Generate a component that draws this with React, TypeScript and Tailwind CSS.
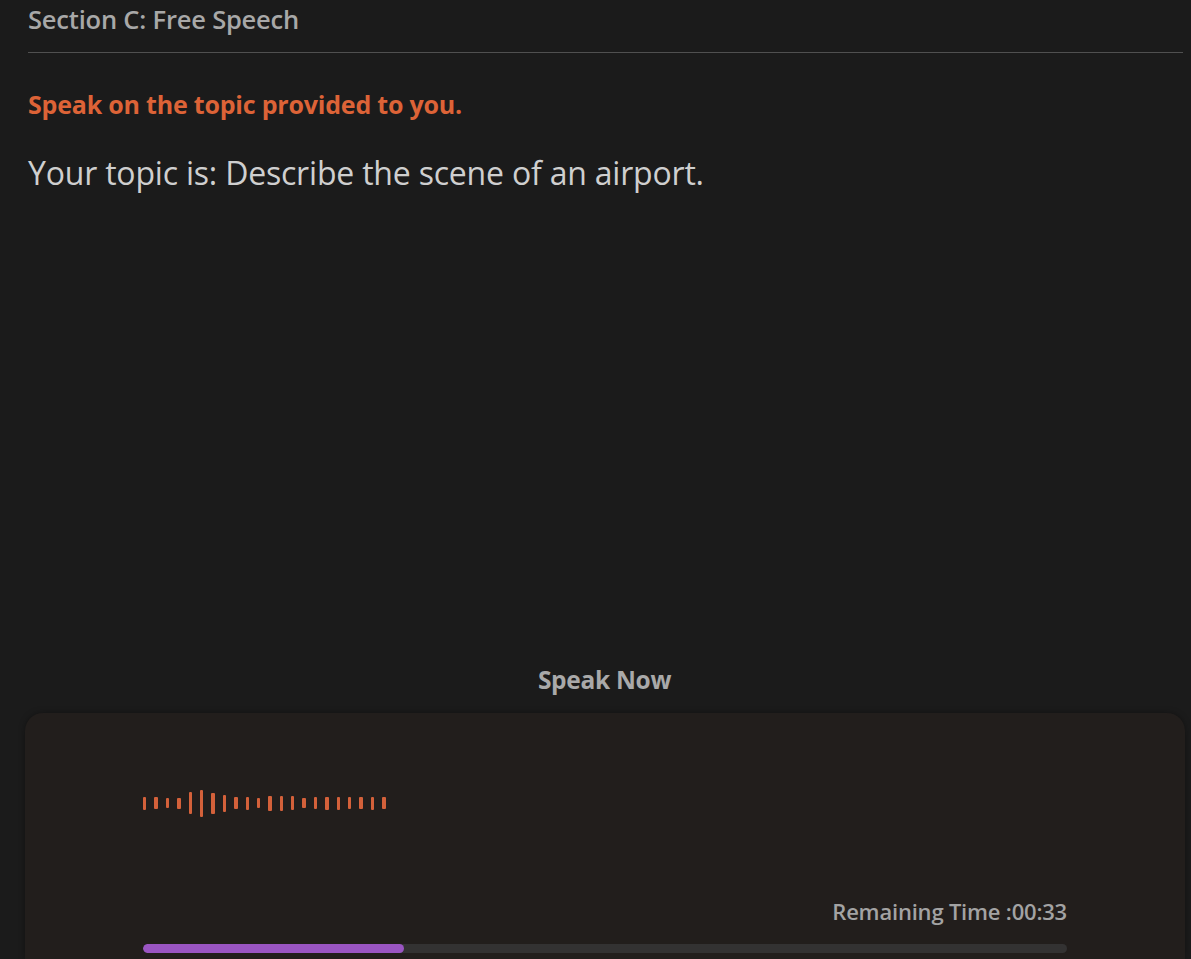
import React from 'react';

const bars = [13, 12, 10, 11, 22, 27, 21, 17, 12, 13, 10, 15, 15, 14, 10, 12, 13, 13, 12, 12, 13, 12];

const Waveform: React.FC = () => (
  <div className="flex items-center h-[30px] gap-[8px]">
    {bars.map((h, i) => (
      <div key={i} className="w-[3.4px] rounded-[1px] bg-[#d4613a]" style={{ height: h }} />
    ))}
  </div>
);

export default function App() {
  return (
    <div
      className="w-[1191px] h-[959px] overflow-hidden bg-[#1b1b1b] flex flex-col"
      style={{ fontFamily: '"Open Sans", sans-serif' }}
    >
      {/* Section header */}
      <div className="pl-[28px] pr-[8px]">
        <h2 className="text-[25.5px] font-semibold text-[#a8a8a8] leading-[38px] tracking-[-0.2px]">
          Section C: Free Speech
        </h2>
        <div className="mt-[14px] h-[1px] bg-[#505050]" />
      </div>

      {/* Instructions */}
      <div className="pl-[28px] pr-[28px]">
        <p className="mt-[37px] text-[25px] font-bold text-[#dd6337] leading-[28px] tracking-[-0.2px]">
          Speak on the topic provided to you.
        </p>
        <p className="mt-[35px] text-[32px] text-[#cfcfcf] leading-[40px] tracking-[-0.2px]">
          Your topic is: Describe the scene of an airport.
        </p>
      </div>

      <div className="flex-1" />

      {/* Recorder */}
      <p className="text-center text-[24.5px] font-bold text-[#a9a9a9] leading-[30px] pl-[18px] tracking-[-0.3px]">
        Speak Now
      </p>
      <div className="mt-[18px] ml-[25px] mr-[6px] h-[246px] rounded-t-[18px] bg-[#221e1c] shadow-[0_0_6px_rgba(0,0,0,0.35)] pt-[75px]">
        <div className="pl-[118px]">
          <Waveform />
        </div>
        <div className="mt-[80px] w-[924px] ml-[118px]">
          <p className="text-right text-[22px] font-semibold text-[#a3a3a3] leading-[26px] tracking-[-0.2px]">
            Remaining Time :00:33
          </p>
          <div className="mt-[20px] h-[9px] rounded-full bg-[#333232] overflow-hidden">
            <div className="h-full rounded-full bg-[#9a55c2]" style={{ width: '28.2%' }} />
          </div>
        </div>
      </div>
    </div>
  );
}
